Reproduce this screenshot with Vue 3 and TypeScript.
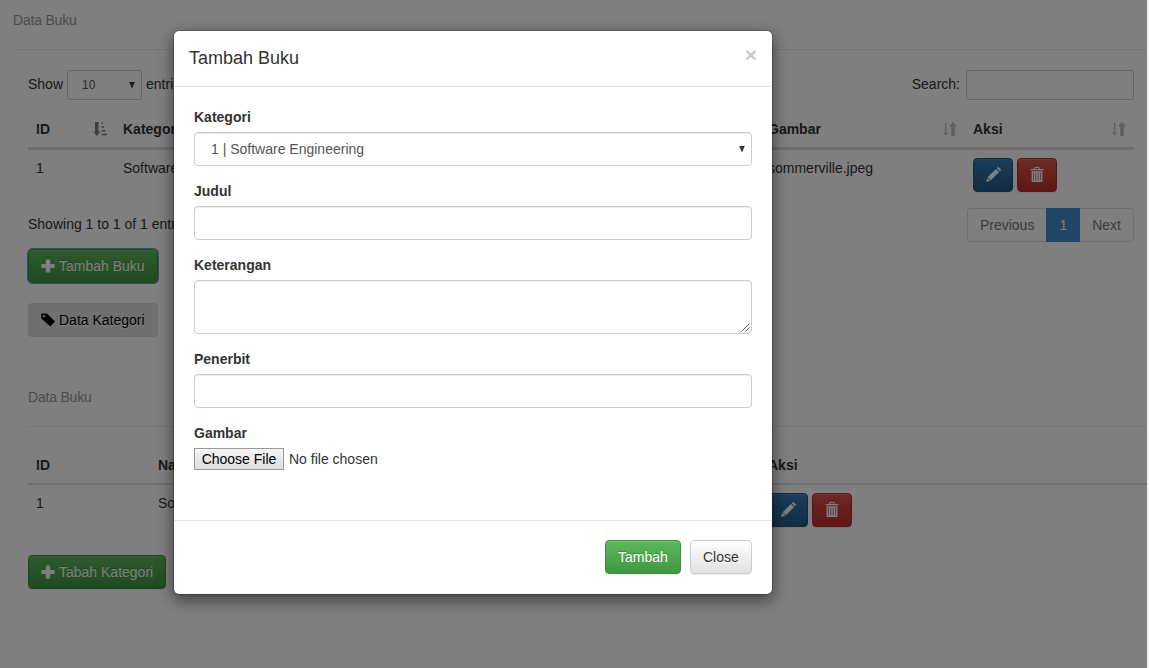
<script setup lang="ts">
import { ref } from 'vue'

interface Column {
  label: string
  sort: 'asc' | 'both'
}

const columns: Column[] = [
  { label: 'ID', sort: 'asc' },
  { label: 'Kategori', sort: 'both' },
  { label: 'Judul', sort: 'both' },
  { label: 'Penerbit', sort: 'both' },
  { label: 'Gambar', sort: 'both' },
  { label: 'Aksi', sort: 'both' },
]

const books = [
  { id: 1, kategori: 'Software Engineering', judul: 'Software', penerbit: 'Pearson', gambar: 'sommerville.jpeg' },
]
const categories = [{ id: 1, nama: 'Software Engineering' }]

const open = ref(true)

const icons = {
  plus: 'M5.400.5h3.200q.6 0 .6.6V5h3.800q.6 0 .6.600v2.800q0 .6-.6.600H9.200v3.900q0 .6-.6.600H5.400q-.6 0-.6-.600V9H1Q.4 9 .4 8.400V5.600Q.4 5 1 5h3.800V1.100q0-.6.6-.6z',
  tag: 'M.2.400h5q.6 0 1 .4l7.300 7.200q.5.500 0 1L9.800 12.900q-.5.500-1 0L.6 5.800Q.2 5.400.2 4.900zM3 1.900a1.200 1.200 0 1 0 0 2.400 1.200 1.200 0 0 0 0-2.400z',
  pencil: 'M9.300 1.800l2.900 2.900-7.700 7.700-2.900-2.900zM10 1.100l.7-.7q.7-.7 1.400 0l1.500 1.500q.6.700 0 1.300l-.7.800zM1.200 10.100l2.700 2.700-3.700 1.100z',
  trash: 'M.3 2.700q0-.8.800-.8H4l.6-1.400Q4.800.1 5.200.1h3.600q.4 0 .6.400l.6 1.400h2.900q.8 0 .8.800v.6H.3zM5.300 1.100l-.3.800h4l-.3-.800zM1.600 4.300h10.800v10.200q0 .5-.6.500H2.200q-.6 0-.6-.5zM3.200 5.500v8h.7v-8zM5.500 5.500v8h.7v-8zM7.800 5.500v8h.7v-8zM10.100 5.500v8h.7v-8z',
}
</script>

<template>
  <div class="window">
    <div class="page">
      <h4 class="legend outer">Data Buku</h4>
      <section class="section">
        <div class="tools">
          <label class="length"><span class="lift">Show</span>
            <span class="mini-select">10<i class="caret"></i></span>
            <span class="lift">entries</span></label>
          <label class="search"><span class="lift">Search:</span><input type="text" /></label>
        </div>

        <div class="row head books">
          <div v-for="c in columns" :key="c.label" class="cell">
            {{ c.label }}
            <svg v-if="c.sort === 'asc'" class="sort asc" viewBox="0 0 14 14">
              <path d="M2 0h3.500v9.500h2L3.700 14 0 9.500h2zM8.500.5H10V2H8.500zM8.500 4.200H11v1.500H8.500zM8.500 8h3.700v1.500H8.500zM8.500 11.800H14v1.500H8.500z" />
            </svg>
            <svg v-else class="sort" viewBox="0 0 14 14">
              <path d="M2 1h1.300v9.500h2L2.600 13.500 0 10.500h2zM10 0l4 4.500h-2.200V14H8.200V4.500H6z" />
            </svg>
          </div>
        </div>
        <div v-for="b in books" :key="b.id" class="row body books">
          <div class="cell">{{ b.id }}</div>
          <div class="cell">{{ b.kategori }}</div>
          <div class="cell">{{ b.judul }}</div>
          <div class="cell">{{ b.penerbit }}</div>
          <div class="cell">{{ b.gambar }}</div>
          <div class="cell actions">
            <button class="btn primary icon"><svg class="pencil" viewBox="0 0 14 14"><path :d="icons.pencil" /></svg></button>
            <button class="btn danger icon"><svg class="trash" viewBox="0 0 14 15"><path fill-rule="evenodd" :d="icons.trash" /></svg></button>
          </div>
        </div>

        <div class="summary">
          <span class="info">Showing 1 to 1 of 1 entries</span>
          <div class="pagination"><a>Previous</a><a class="active">1</a><a>Next</a></div>
        </div>

        <button class="btn success add focused" @click="open = true">
          <svg viewBox="0 0 14 14"><path :d="icons.plus" /></svg>Tambah Buku
        </button>
        <button class="btn plain">
          <svg viewBox="0 0 14 14"><path fill-rule="evenodd" :d="icons.tag" /></svg>Data Kategori
        </button>
      </section>

      <section class="section second">
        <h4 class="legend">Data Buku</h4>
        <div class="row head cats">
          <div class="cell">ID</div>
          <div class="cell">Nama</div>
          <div class="cell">Aksi</div>
        </div>
        <div v-for="c in categories" :key="c.id" class="row body cats">
          <div class="cell">{{ c.id }}</div>
          <div class="cell">{{ c.nama }}</div>
          <div class="cell actions">
            <button class="btn primary icon"><svg class="pencil" viewBox="0 0 14 14"><path :d="icons.pencil" /></svg></button>
            <button class="btn danger icon"><svg class="trash" viewBox="0 0 14 15"><path fill-rule="evenodd" :d="icons.trash" /></svg></button>
          </div>
        </div>
        <button class="btn success add-cat">
          <svg viewBox="0 0 14 14"><path :d="icons.plus" /></svg>Tabah Kategori
        </button>
      </section>
    </div>

    <div v-if="open" class="backdrop">
      <form class="modal" @submit.prevent>
        <header>
          <h4>Tambah Buku</h4>
          <button type="button" class="close" @click="open = false">×</button>
        </header>
        <div class="fields">
          <label>Kategori</label>
          <div class="control select">1 | Software Engineering<i class="caret"></i></div>
          <label>Judul</label>
          <input class="control" type="text" />
          <label>Keterangan</label>
          <div class="area">
            <textarea class="control"></textarea>
            <svg class="grip" viewBox="0 0 9 9"><path d="M.5 8.500l8-8M4.500 8.500l4-4" /></svg>
          </div>
          <label>Penerbit</label>
          <input class="control" type="text" />
          <label>Gambar</label>
          <div class="file"><button type="button">Choose File</button><span>No file chosen</span></div>
        </div>
        <footer>
          <button type="submit" class="btn success">Tambah</button>
          <button type="button" class="btn default" @click="open = false">Close</button>
        </footer>
      </form>
    </div>
  </div>
</template>

<style>
body {
  background: #f4f4f4;
  overflow: hidden;
}
</style>

<style scoped>
* {
  box-sizing: border-box;
}
.window {
  position: relative;
  width: 1147px;
  height: 668px;
  overflow: hidden;
  background: #fff;
  color: #333;
  font: 14px/20px Arial, "Liberation Sans", sans-serif;
}
button, input, textarea {
  font: inherit;
}
.page {
  padding: 10px 0 0 13px;
}
.legend {
  margin: 0;
  height: 40px;
  border-bottom: 1px solid #eaeaea;
  color: #999;
  font-size: 14px;
  font-weight: 400;
  letter-spacing: -.2px;
}
.section {
  padding: 20px 13px 0 15px;
}
.tools {
  display: flex;
  justify-content: space-between;
  height: 41px;
}
.length, .search {
  display: flex;
  align-items: center;
  height: 30px;
}
.length {
  gap: 4px;
  white-space: nowrap;
}
.lift {
  padding-bottom: 2px;
}
.mini-select {
  display: flex;
  align-items: center;
  justify-content: space-between;
  width: 75px;
  height: 30px;
  padding: 0 6px 0 14px;
  border: 1px solid #ccc;
  border-radius: 3px;
  color: #555;
  font-size: 12px;
}
.caret {
  width: 6px;
  height: 7px;
  background: #333;
  clip-path: polygon(0 0, 100% 0, 50% 100%);
}
.search input {
  width: 168px;
  height: 30px;
  margin-left: 6px;
  border: 1px solid #ccc;
  border-radius: 3px;
  background: #fff;
}
.row {
  display: grid;
}
.books {
  grid-template-columns: 87px 215px 215px 215px 205px 169px;
}
.cats {
  grid-template-columns: 122px 610px 1fr;
}
.cell {
  position: relative;
  padding: 8px;
  white-space: nowrap;
}
.head {
  font-weight: 700;
  border-bottom: 2px solid #ddd;
}
.books.body {
  border-top: 1px solid #ddd;
}
.sort {
  position: absolute;
  right: 8px;
  bottom: 11px;
  width: 14px;
  height: 14px;
  opacity: .25;
}
.sort.asc {
  opacity: .5;
}
.actions {
  display: flex;
  gap: 4px;
}
.btn {
  display: flex;
  align-items: center;
  height: 34px;
  padding: 0 12px;
  border: 1px solid;
  border-radius: 4px;
  color: #fff;
  white-space: nowrap;
  text-shadow: 0 -1px 0 rgba(0, 0, 0, .2);
  box-shadow: inset 0 1px 0 rgba(255, 255, 255, .15), 0 1px 1px rgba(0, 0, 0, .075);
}
.btn svg {
  flex: none;
  width: 14px;
  height: 14px;
  margin: -1px 4px 0 0;
  fill: currentColor;
}
.btn.icon svg {
  margin: 0;
}
.btn.icon .pencil {
  width: 15px;
  height: 15px;
  margin-top: -2px;
}
.btn.icon .trash {
  height: 15px;
  margin-top: -2px;
}
.icon {
  width: 40px;
}
.primary {
  background: linear-gradient(#337ab7, #265a88);
  border-color: #245580;
}
.danger {
  background: linear-gradient(#d9534f, #c12e2a);
  border-color: #b92c28;
}
.success {
  background: linear-gradient(#5cb85c, #419641);
  border-color: #3e8f3e;
}
.plain {
  width: 130px;
  margin-top: 20px;
  background: #e0e0e0;
  border-color: #dbdbdb;
  color: #000;
  text-shadow: 0 1px 0 #fff;
  box-shadow: none;
}
.default {
  background: linear-gradient(#fff, #e0e0e0);
  border-color: #ccc;
  color: #333;
  text-shadow: 0 1px 0 #fff;
}
.summary {
  display: flex;
  justify-content: space-between;
  margin-top: 8px;
  height: 41px;
}
.info {
  padding-top: 6px;
}
.pagination {
  display: flex;
  height: 34px;
}
.pagination a {
  padding: 6px 12px;
  border: 1px solid #ddd;
  color: #777;
}
.pagination a:first-child {
  border-right: 0;
  border-radius: 4px 0 0 4px;
}
.pagination a:last-child {
  border-left: 0;
  border-radius: 0 4px 4px 0;
}
.pagination .active {
  background: #428bca;
  border-color: #428bca;
  color: #fff;
}
.add {
  width: 130px;
}
.focused {
  outline: 1px solid #5b9dd9;
}
.second {
  padding: 50px 0 0 15px;
}
.second .legend {
  margin-bottom: 20px;
}
.add-cat {
  width: 138px;
  margin-top: 20px;
}
.backdrop {
  position: absolute;
  inset: 0;
  padding: 30px 0 0 173px;
  background: rgba(0, 0, 0, .5);
}
.modal {
  width: 600px;
  height: 565px;
  display: flex;
  flex-direction: column;
  border: 1px solid rgba(0, 0, 0, .2);
  border-radius: 6px;
  background: #fff;
  background-clip: padding-box;
  box-shadow: 0 5px 15px rgba(0, 0, 0, .5);
}
header {
  display: flex;
  justify-content: space-between;
  height: 56px;
  padding: 14px 15px;
  border-bottom: 1px solid #e5e5e5;
}
header h4 {
  margin: 0;
  font-size: 18px;
  font-weight: 500;
  line-height: 26px;
}
.close {
  height: 20px;
  padding: 0;
  border: 0;
  background: none;
  color: #ccc;
  font-size: 21px;
  font-weight: 700;
  line-height: 20px;
}
.fields {
  flex: 1;
  padding: 20px;
}
.fields label {
  display: block;
  height: 20px;
  margin-bottom: 5px;
  font-weight: 700;
}
.control {
  display: block;
  width: 558px;
  height: 34px;
  margin-bottom: 15px;
  border: 1px solid #ccc;
  border-radius: 4px;
  background: #fff;
  box-shadow: inset 0 1px 1px rgba(0, 0, 0, .075);
}
.select {
  display: flex;
  align-items: center;
  justify-content: space-between;
  padding: 0 6px 0 16px;
  color: #555;
}
.area {
  position: relative;
}
textarea.control {
  height: 54px;
  resize: none;
}
.grip {
  position: absolute;
  right: 2px;
  bottom: 2px;
  width: 9px;
  height: 9px;
  fill: none;
  stroke: #666;
}
.file {
  display: flex;
  align-items: center;
  gap: 5px;
  height: 22px;
}
.file button {
  width: 90px;
  height: 22px;
  padding: 0;
  border: 1px solid #999;
  border-radius: 0;
  background: linear-gradient(#f5f5f5, #ddd);
  color: #000;
  line-height: 20px;
}
footer {
  display: flex;
  justify-content: flex-end;
  gap: 9px;
  height: 74px;
  padding: 19px 20px;
  border-top: 1px solid #e5e5e5;
}
footer .success {
  width: 76px;
}
footer .default {
  width: 62px;
}
</style>
